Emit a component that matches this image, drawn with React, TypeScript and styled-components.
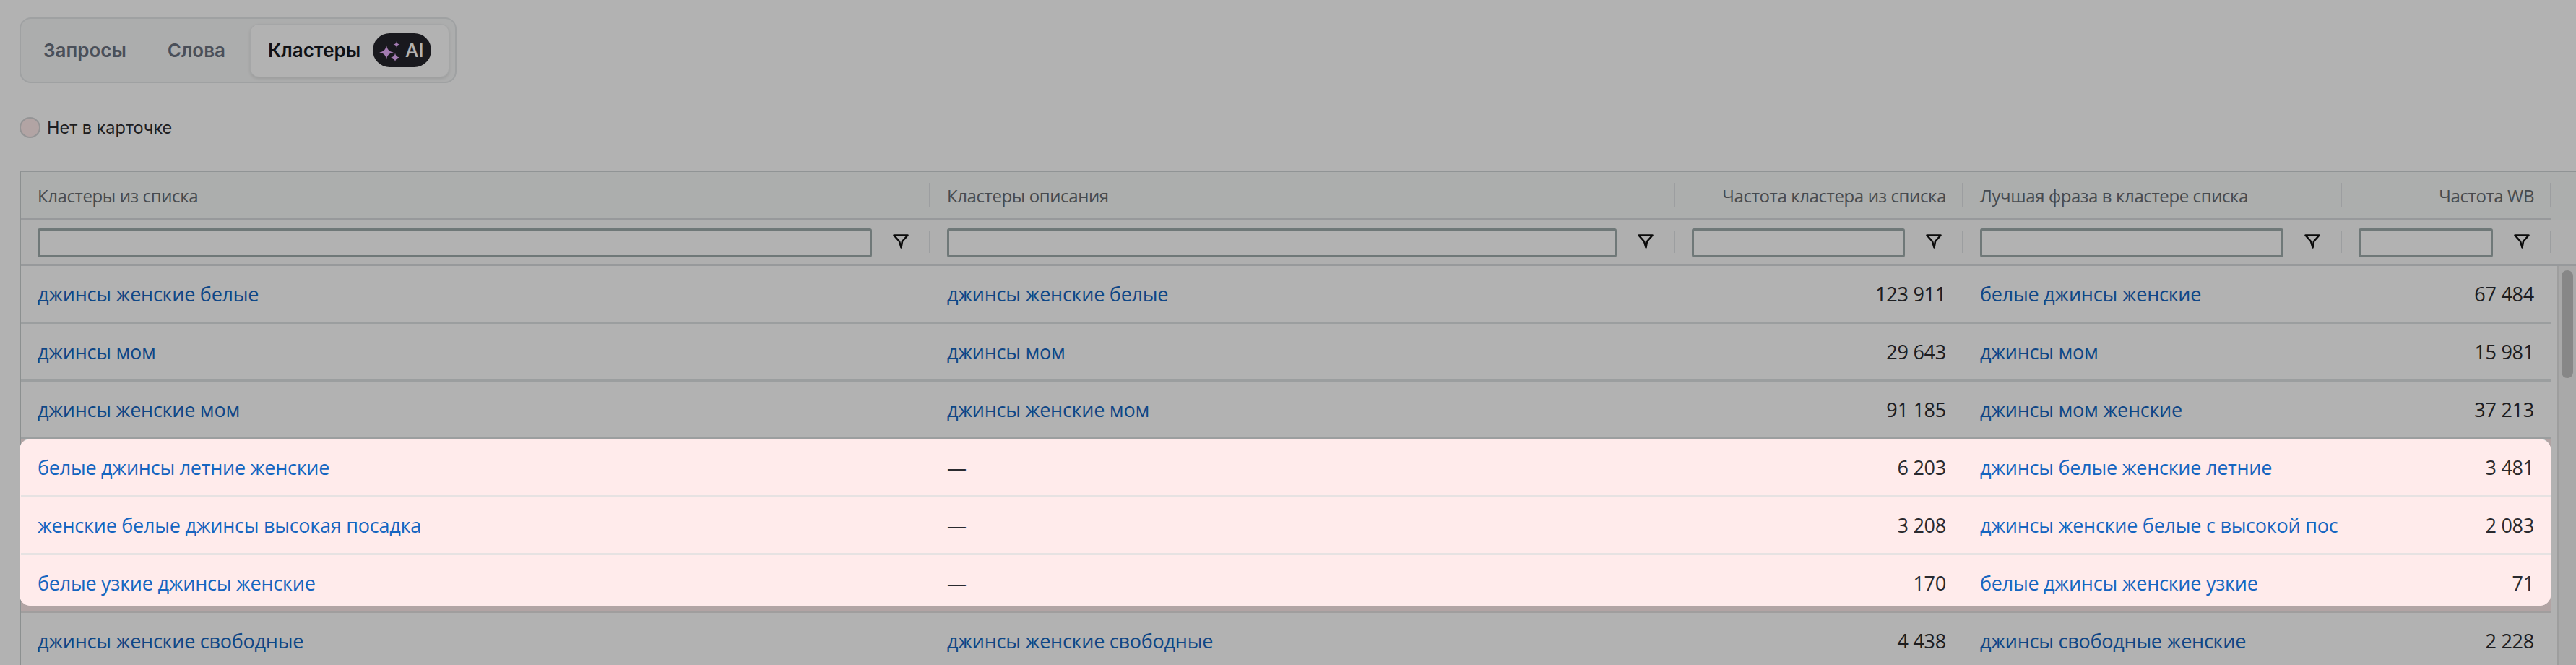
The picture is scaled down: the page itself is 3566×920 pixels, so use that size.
import React from "react";
import styled, { createGlobalStyle } from "styled-components";

const GlobalStyle = createGlobalStyle`
    html, body {
        margin: 0;
        padding: 0;
        height: 100%;
        overflow: hidden;
        background: #fff;
    }
    #root {
        height: 100%;
    }
`;

const COLUMNS = "1258px 1031px 399px 524px 290px";

type RowData = {
    cluster: string;
    description?: string;
    freq: string;
    phrase: string;
    wb: string;
    missing?: boolean;
};

const rows: RowData[] = [
    { cluster: "джинсы женские белые", description: "джинсы женские белые", freq: "123 911", phrase: "белые джинсы женские", wb: "67 484" },
    { cluster: "джинсы мом", description: "джинсы мом", freq: "29 643", phrase: "джинсы мом", wb: "15 981" },
    { cluster: "джинсы женские мом", description: "джинсы женские мом", freq: "91 185", phrase: "джинсы мом женские", wb: "37 213" },
    { cluster: "белые джинсы летние женские", freq: "6 203", phrase: "джинсы белые женские летние", wb: "3 481", missing: true },
    { cluster: "женские белые джинсы высокая посадка", freq: "3 208", phrase: "джинсы женские белые с высокой пос", wb: "2 083", missing: true },
    { cluster: "белые узкие джинсы женские", freq: "170", phrase: "белые джинсы женские узкие", wb: "71", missing: true },
    { cluster: "джинсы женские свободные", description: "джинсы женские свободные", freq: "4 438", phrase: "джинсы свободные женские", wb: "2 228" },
];

const Page = styled.div`
    position: relative;
    height: 920px;
    padding-top: 24px;
    box-sizing: border-box;
    overflow: hidden;
    font-family: "Open Sans", "Liberation Sans", sans-serif;
`;

const Tabs = styled.div`
    display: inline-flex;
    align-items: center;
    gap: 11px;
    box-sizing: border-box;
    width: 605px;
    height: 91px;
    margin-left: 27px;
    padding: 0 8px;
    border: 2px solid #e4e7e9;
    border-radius: 16px;
    background: #f7f8f8;
    vertical-align: top;
`;

const Tab = styled.div<{ $active?: boolean }>`
    display: flex;
    align-items: center;
    gap: 17px;
    box-sizing: border-box;
    height: 74px;
    padding: 0 ${(p) => (p.$active ? "24px" : "22px")};
    border-radius: 12px;
    border: ${(p) => (p.$active ? "1px solid #eceeef" : "1px solid transparent")};
    background: ${(p) => (p.$active ? "#fff" : "transparent")};
    box-shadow: ${(p) => (p.$active ? "0 2px 4px rgba(0,0,0,.1)" : "none")};
    font-family: Inter, "Liberation Sans", sans-serif;
    font-size: 26px;
    font-weight: 600;
    color: ${(p) => (p.$active ? "#16181d" : "#6b7280")};
`;

const AiBadge = styled.span`
    display: inline-flex;
    align-items: center;
    box-sizing: border-box;
    width: 81px;
    height: 47px;
    padding-left: 9px;
    border-radius: 24px;
    background: #25252b;
    color: #fff;
    font-size: 26px;
    font-weight: 500;
`;

const Legend = styled.div`
    display: flex;
    align-items: center;
    gap: 9px;
    height: 30px;
    margin: 46px 0 45px 27px;
    font-family: Inter, "Liberation Sans", sans-serif;
    font-size: 23.5px;
    color: #2b2b30;
`;

const LegendDot = styled.span`
    box-sizing: border-box;
    width: 29px;
    height: 29px;
    border-radius: 50%;
    border: 2px solid #d4d4d6;
    background: #ffebeb;
`;

const Table = styled.div`
    margin-left: 27px;
    border-left: 2px solid #c9cfcf;
    border-top: 2px solid #cfd4d6;
`;

const HeadRow = styled.div`
    display: grid;
    grid-template-columns: ${COLUMNS};
    width: 3502px;
    height: 66px;
    box-sizing: border-box;
    border-bottom: 3px solid #d9dcde;
`;

const HeadWrap = styled.div`
    background: #f7f9f8;
`;

const FilterRow = styled.div`
    display: grid;
    grid-template-columns: ${COLUMNS};
    height: 64px;
    box-sizing: border-box;
    border-bottom: 3px solid #d9dcde;
    background: #fbfbfb;
`;

const HeadCell = styled.div<{ $right?: boolean }>`
    position: relative;
    display: flex;
    align-items: center;
    justify-content: ${(p) => (p.$right ? "flex-end" : "flex-start")};
    padding: 2px 23px 0 24px;
    font-size: 24px;
    letter-spacing: -0.4px;
    color: #666b70;

    &:first-child {
        padding-left: 23px;
    }

    &::after {
        content: "";
        position: absolute;
        right: -1px;
        top: 15px;
        bottom: 15px;
        width: 2px;
        background: #e0e3e5;
    }
`;

const FilterCell = styled.div`
    position: relative;
    display: flex;
    align-items: center;
    gap: 28px;
    padding: 2px 28px 0 24px;
    box-sizing: border-box;

    &:first-child {
        padding-left: 23px;
    }

    &::after {
        content: "";
        position: absolute;
        right: -1px;
        top: 16px;
        bottom: 15px;
        width: 2px;
        background: #e0e3e5;
    }
`;

const FilterInput = styled.div`
    flex: 1;
    height: 40px;
    box-sizing: border-box;
    border: 3px solid #9fadac;
    border-radius: 3px;
    background: #fff;
`;

const FilterIcon = styled.svg`
    flex: none;
    width: 24px;
    height: 22px;
    margin-top: -3px;
`;

const BodyWrap = styled.div`
    display: flex;
`;

const Rows = styled.div`
    width: 3502px;
`;

const Row = styled.div<{ $missing?: boolean }>`
    display: grid;
    grid-template-columns: ${COLUMNS};
    height: 80px;
    box-sizing: border-box;
    border-bottom: 3px solid ${(p) => (p.$missing ? "#e6e2e2" : "#dfe2e4")};
    background: ${(p) => (p.$missing ? "#ffebeb" : "#fff")};
`;

const Cell = styled.div<{ $right?: boolean; $link?: boolean }>`
    display: flex;
    align-items: center;
    justify-content: ${(p) => (p.$right ? "flex-end" : "flex-start")};
    padding: 0 23px 0 24px;
    overflow: hidden;
    white-space: nowrap;
    font-size: 27px;
    letter-spacing: -0.25px;
    color: ${(p) => (p.$link ? "#1565c0" : "#2a2a2e")};

    &:first-child {
        padding-left: 23px;
    }
`;

const Gutter = styled.div`
    flex: none;
    width: 9px;
`;

const Scrollbar = styled.div`
    flex: 1;
    border-left: 3px solid #e2e2e2;
    padding: 6px 4px 0 3px;
    background: #f3f3f3;
`;

const ScrollThumb = styled.div`
    height: 149px;
    border-radius: 8px;
    background: #c2c2c2;
`;

const Overlay = styled.div`
    position: absolute;
    inset: 0;
    background: rgba(0, 0, 0, 0.3);
`;

const Spotlight = styled.div`
    position: absolute;
    left: 27px;
    top: 607px;
    width: 3504px;
    height: 231px;
    padding-left: 2px;
    box-sizing: border-box;
    border-top: 1px solid #dbe6e6;
    border-radius: 15px;
    overflow: hidden;
    background: #ffebeb;
`;

const FunnelIcon = () => (
    <FilterIcon viewBox="0 0 24 22" fill="none">
        <path d="M2.500 2.500h19L14 11l-1.500 8.500L10 11z" stroke="#111" strokeWidth="2.600" strokeLinejoin="round" />
    </FilterIcon>
);

const SparkleIcon = () => (
    <svg width="36" height="36" viewBox="0 0 36 36">
        <path d="M10 10.500C10.800 16.500 14 19.700 20 20.500 14 21.300 10.800 24.500 10 30.500 9.200 24.500 6 21.300 0 20.500 6 19.700 9.200 16.500 10 10.500z" fill="#eab0ff" />
        <path d="M24 5C24.400 7.800 25.700 9.100 28.500 9.500 25.700 9.900 24.400 11.200 24 14 23.600 11.200 22.300 9.900 19.500 9.500 22.300 9.100 23.600 7.800 24 5z" fill="#eab0ff" />
        <path d="M22 21.500C22.500 25 24.500 27 28 27.500 24.500 28 22.500 30 22 33.500 21.500 30 19.500 28 16 27.500 19.500 27 21.500 25 22 21.500z" fill="#eab0ff" />
    </svg>
);

const DataRow = ({ row }: { row: RowData }) => (
    <Row $missing={row.missing}>
        <Cell $link>{row.cluster}</Cell>
        <Cell $link={!!row.description}>{row.description ?? "—"}</Cell>
        <Cell $right>{row.freq}</Cell>
        <Cell $link>{row.phrase}</Cell>
        <Cell $right>{row.wb}</Cell>
    </Row>
);

export default function App() {
    return (
        <Page>
            <GlobalStyle />
            <Tabs>
                <Tab>Запросы</Tab>
                <Tab>Слова</Tab>
                <Tab $active>
                    Кластеры
                    <AiBadge>
                        <SparkleIcon />
                        AI
                    </AiBadge>
                </Tab>
            </Tabs>
            <Legend>
                <LegendDot />
                Нет в карточке
            </Legend>
            <Table>
                <HeadWrap>
                    <HeadRow>
                        <HeadCell>Кластеры из списка</HeadCell>
                        <HeadCell>Кластеры описания</HeadCell>
                        <HeadCell $right>Частота кластера из списка</HeadCell>
                        <HeadCell>Лучшая фраза в кластере списка</HeadCell>
                        <HeadCell $right>Частота WB</HeadCell>
                    </HeadRow>
                    <FilterRow>
                        {[0, 1, 2, 3, 4].map((i) => (
                            <FilterCell key={i}>
                                <FilterInput />
                                <FunnelIcon />
                            </FilterCell>
                        ))}
                    </FilterRow>
                </HeadWrap>
                <BodyWrap>
                    <Rows>
                        {rows.map((row) => (
                            <DataRow key={row.cluster} row={row} />
                        ))}
                    </Rows>
                    <Gutter />
                    <Scrollbar>
                        <ScrollThumb />
                    </Scrollbar>
                </BodyWrap>
            </Table>
            <Overlay />
            <Spotlight>
                {rows.filter((r) => r.missing).map((row) => (
                    <DataRow key={row.cluster} row={row} />
                ))}
            </Spotlight>
        </Page>
    );
}
